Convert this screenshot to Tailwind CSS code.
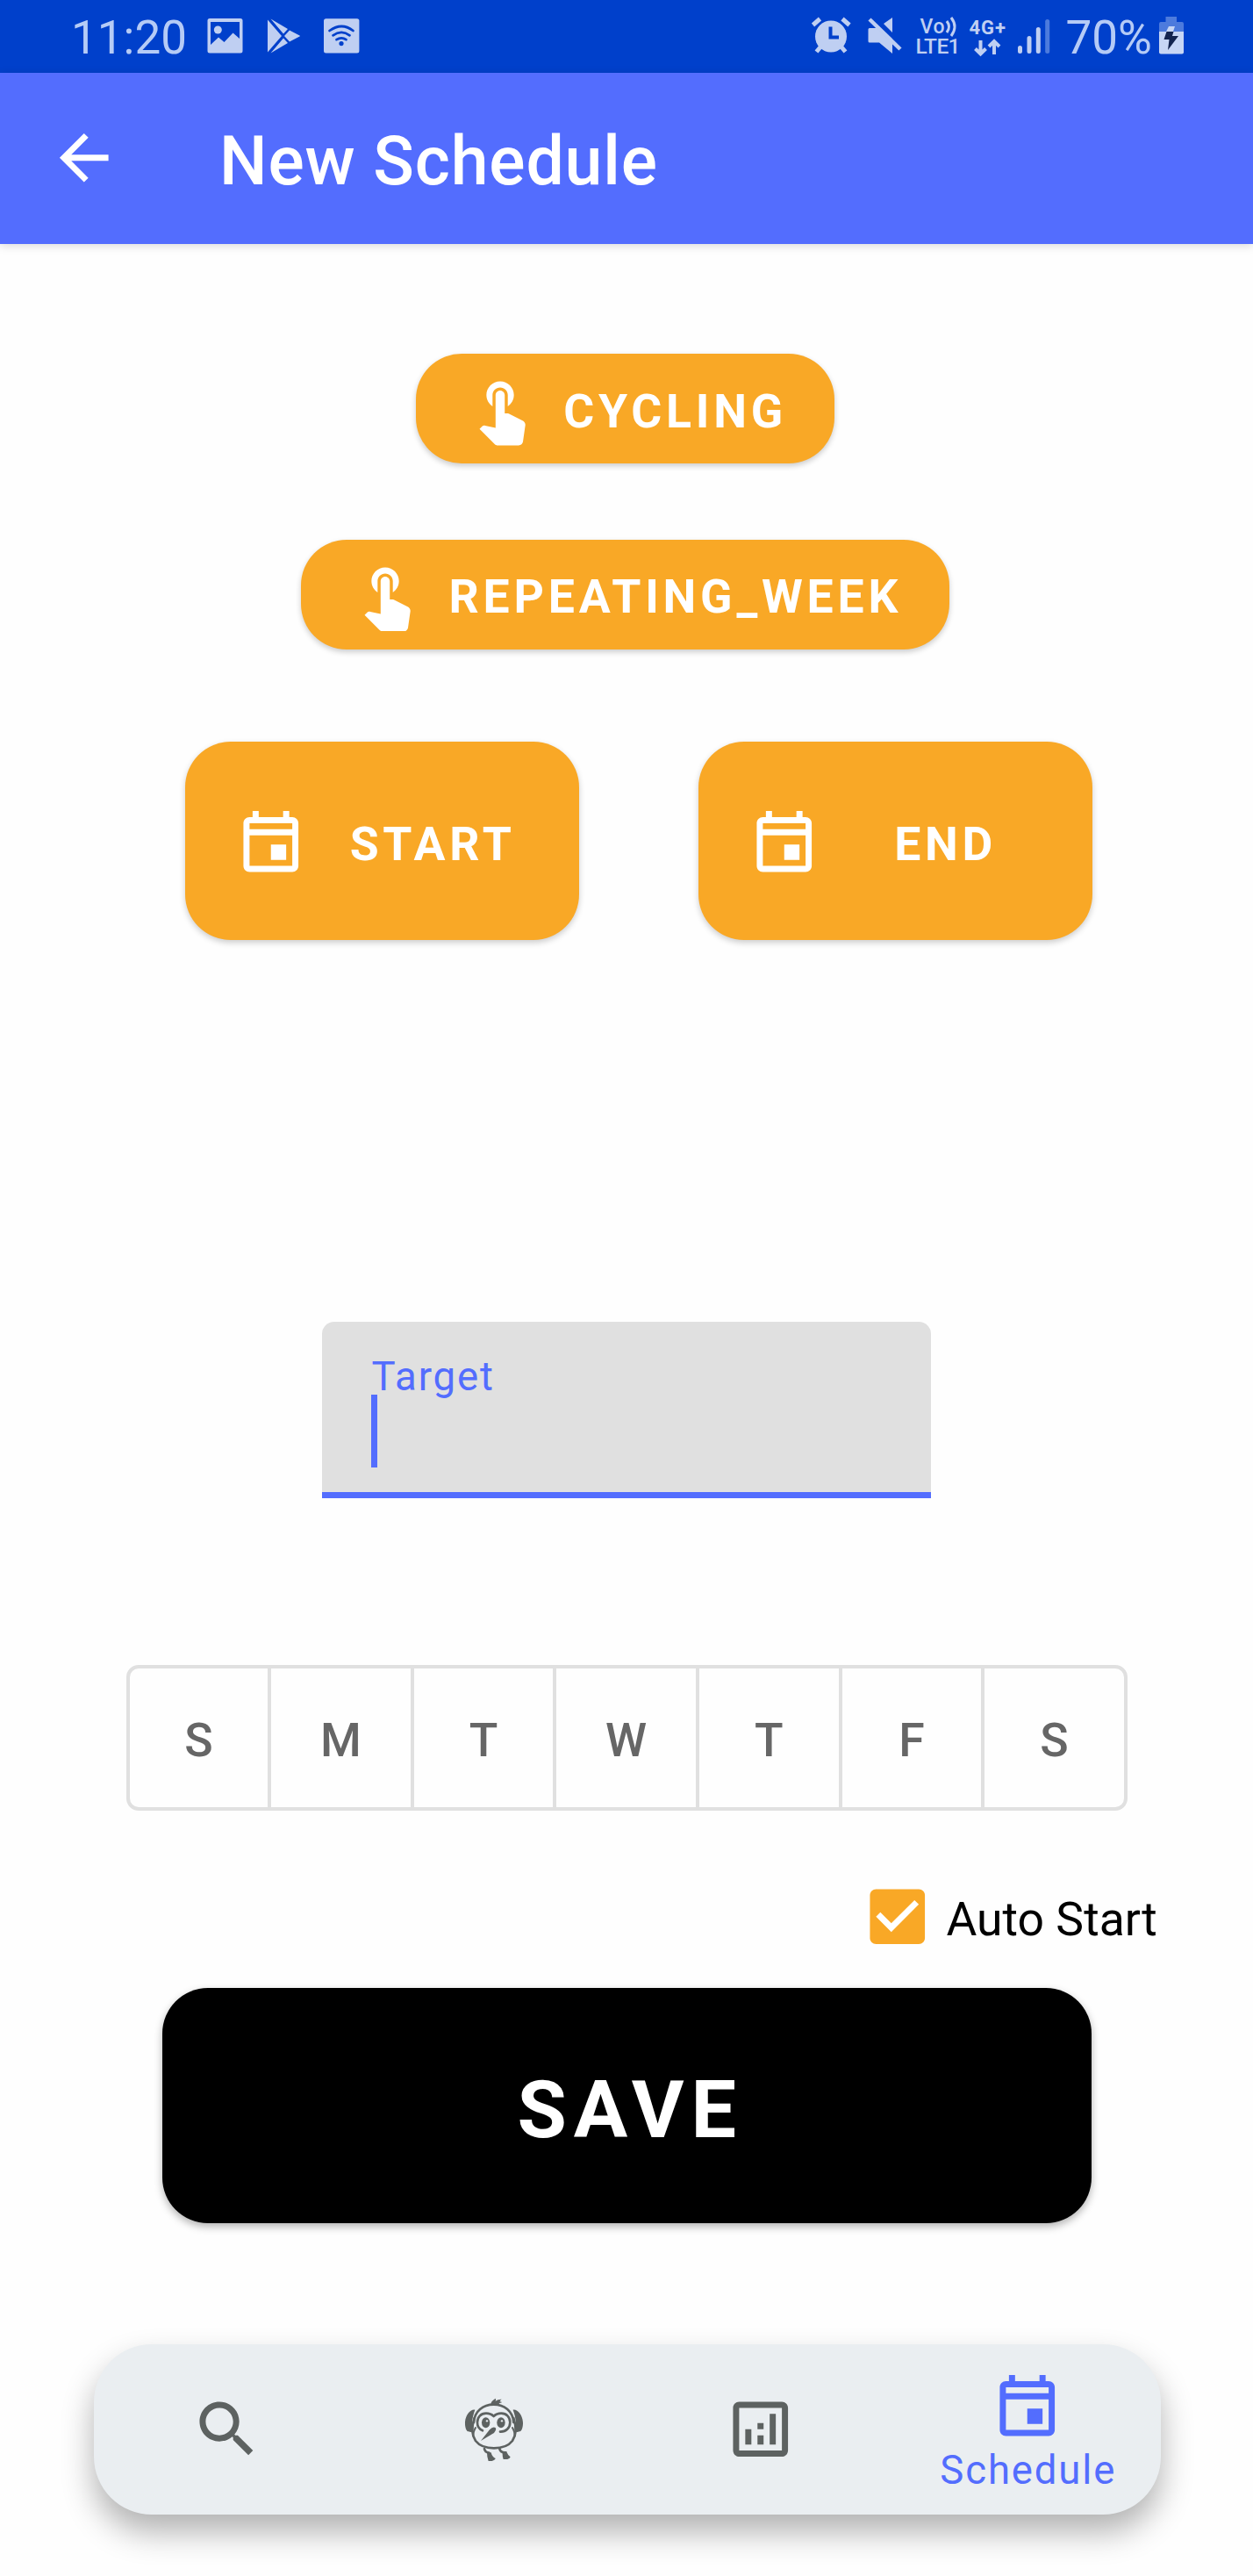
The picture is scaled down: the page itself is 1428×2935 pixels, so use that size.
<!DOCTYPE html>
<html lang="en">
<head>
<meta charset="utf-8">
<title>New Schedule</title>
<script src="https://cdn.jsdelivr.net/npm/@tailwindcss/browser@4"></script>
</head>
<body class="bg-white">
<div class="flex h-[2935px] w-[1428px] flex-col overflow-hidden bg-[#fefefe] font-[Roboto,sans-serif] leading-none">

  <!-- status bar -->
  <div class="flex h-[83px] shrink-0 items-start bg-[#0040cb] pl-[81px] text-[#b5cbf6]">
    <span class="w-[154px] pt-[17px] text-[53px]">11:20</span>
    <svg class="h-[83px] w-[176px]" viewBox="235 0 176 83" fill="#bfcff2">
      <path fill-rule="evenodd" d="M239 21h35q2.500 0 2.500 2.500v34.500q0 2.500-2.500 2.500h-35q-2.500 0-2.500-2.500v-34.500q0-2.500 2.500-2.500zM240 25v26l9-8.500 6.500 5.500 10-10.500 7.500 6.500v-19z"/>
      <circle cx="248.300" cy="34" r="4.500"/>
      <path d="M305 22.500v37l16-18.500zM308.500 21.500l14.500 17 5-5.500zM308.500 60.500l14.500-17 5 5.500zM330 34.500l-6 6.500 6 6.500 11.500-6q1-.5 0-1z"/>
      <rect x="369" y="21.300" width="40.400" height="39.300" rx="2.500"/>
      <g fill="none" stroke="#0040cb" stroke-width="2.700" stroke-linecap="round"><path d="M375.500 35q14-10 27 0M379.500 40.300q9.700-6.800 19 0M383.500 45.200q5.700-3.700 11 0"/></g>
      <circle cx="389" cy="49.600" r="2.600" fill="#0040cb"/>
    </svg>
    <svg class="ml-[512px] h-[83px] w-[284px]" viewBox="923 0 284 83" fill="#bfcff2">
      <circle cx="947" cy="41.500" r="18"/>
      <path stroke="#bfcff2" stroke-width="5" d="M926.500 28.500l8-7M968 28.500l-8-7"/>
      <path stroke="#bfcff2" stroke-width="5" d="M930.500 59l5-6M963.500 59l-5-6"/>
      <path fill="none" stroke="#0040cb" stroke-width="4" d="M946.500 30.500v12h9.500"/>
      <path d="M1017 20v17l-10-10zM991 32h8l18 17v12l-15-12.500h-11q-1.500 0-1.500-1.500v-13.500q0-1.500 1.500-1.500z"/>
      <path fill="none" stroke="#bfcff2" stroke-width="4.500" d="M991 22l35 34"/>
      <text x="1048.500" y="37.500" font-size="23" font-weight="500" textLength="28">Vo</text>
      <path fill="none" stroke="#bfcff2" stroke-width="3" d="M1079 24q5 6.500 0 13M1084 20q8 10.500 0 21"/>
      <text x="1043.500" y="61.300" font-size="24.500" font-weight="500" textLength="51">LTE1</text>
      <text x="1104.500" y="38.700" font-size="22" font-weight="700" textLength="41.500">4G+</text>
      <path fill="none" stroke="#bfcff2" stroke-width="4" d="M1117.500 46v15M1111.500 55.500l6 6 6-6M1133 62v-15M1127 53l6-6 6 6"/>
      <path stroke="#bfcff2" stroke-width="5" stroke-linecap="round" d="M1162.500 54.500v4M1173 43.500v15M1183.300 33.500v25"/>
      <path stroke="#4d7bdd" stroke-width="5" stroke-linecap="round" d="M1193.700 24.500v34"/>
    </svg>
    <span class="ml-[7.500px] w-[105.500px] pt-[17px] text-[53px]">70%</span>
    <svg class="h-[83px] w-[30px]" viewBox="1319 0 30 83">
      <path fill="#4d7bdd" d="M1327.500 19h12.500v6h6q2 0 2 2v9h-28v-9q0-2 2-2h5.500z"/>
      <path fill="#c7d6f5" d="M1320 36h28v23.500q0 2-2 2h-24q-2 0-2-2z"/>
      <path fill="#c7d6f5" d="M1331 30h7l-2 6h-8z"/>
      <path fill="#13244f" d="M1328.500 36h8l-1.500 5h7l-12 16 1.500-12h-6z"/>
    </svg>
  </div>

  <!-- app bar -->
  <header class="z-10 flex h-[194.500px] shrink-0 items-center bg-[#536dfe] pl-[53.500px] text-white shadow-[0_2px_10px_rgba(0,0,0,0.15)]">
    <svg class="h-[83.500px] w-[83.500px] mb-[2px]" viewBox="0 0 24 24" fill="currentColor"><path d="M20 11H7.830l5.590-5.590L12 4l-8 8 8 8 1.410-1.410L7.830 13H20v-2z"/></svg>
    <h1 class="ml-[113px] pt-[9px] text-[77px] font-medium tracking-[0.800px]">New Schedule</h1>
  </header>

  <main class="flex grow flex-col items-center text-[53.500px] font-bold text-white">
    <button class="mt-[125.800px] mr-[3px] flex h-[125px] w-[477.500px] items-center rounded-[52px] bg-[#f9a826] pl-[56px] shadow-[0_3px_6px_rgba(0,0,0,0.2)]">
      <svg class="h-[83.500px] w-[83.500px]" viewBox="0 0 24 24" fill="currentColor"><path d="M9 11.240V7.500C9 6.120 10.120 5 11.500 5S14 6.120 14 7.500v3.740c1.210-.81 2-2.180 2-3.740C16 5.010 13.990 3 11.500 3S7 5.010 7 7.500c0 1.560.79 2.930 2 3.740zm9.840 4.630l-4.540-2.260c-.17-.07-.35-.11-.54-.11H13v-6c0-.83-.67-1.500-1.500-1.500S10 6.670 10 7.500v10.740l-3.430-.72c-.08-.01-.15-.03-.24-.03-.31 0-.59.13-.79.33l-.79.8 4.940 4.940c.27.27.65.44 1.060.44h6.790c.75 0 1.330-.55 1.440-1.280l.75-5.270c.01-.07.02-.14.02-.2 0-.62-.38-1.160-.91-1.380z"/></svg>
      <span class="ml-[29px] pt-[6px] tracking-[4.800px]">CYCLING</span>
    </button>
    <button class="mt-[86.700px] mr-[3px] flex h-[125px] w-[739px] items-center rounded-[52px] bg-[#f9a826] pl-[56px] shadow-[0_3px_6px_rgba(0,0,0,0.2)]">
      <svg class="h-[83.500px] w-[83.500px]" viewBox="0 0 24 24" fill="currentColor"><path d="M9 11.240V7.500C9 6.120 10.120 5 11.500 5S14 6.120 14 7.500v3.740c1.210-.81 2-2.180 2-3.740C16 5.010 13.990 3 11.500 3S7 5.010 7 7.500c0 1.560.79 2.930 2 3.740zm9.840 4.630l-4.540-2.260c-.17-.07-.35-.11-.54-.11H13v-6c0-.83-.67-1.500-1.500-1.500S10 6.670 10 7.500v10.740l-3.430-.72c-.08-.01-.15-.03-.24-.03-.31 0-.59.13-.79.33l-.79.8 4.940 4.940c.27.27.65.44 1.060.44h6.790c.75 0 1.330-.55 1.440-1.280l.75-5.270c.01-.07.02-.14.02-.2 0-.62-.38-1.160-.91-1.380z"/></svg>
      <span class="ml-[29px] pt-[5px] tracking-[4.800px]">REPEATING_WEEK</span>
    </button>

    <div class="mt-[105.500px] flex w-full gap-[136px] pl-[210.700px]">
      <button class="flex h-[226px] w-[449px] items-center rounded-[52px] bg-[#f9a826] px-[56px] shadow-[0_3px_7px_rgba(0,0,0,0.2)]">
        <svg class="h-[83.500px] w-[83.500px]" viewBox="0 0 24 24" fill="currentColor"><path d="M19 4h-1V2h-2v2H8V2H6v2H5c-1.110 0-2 .9-2 2v14c0 1.100.89 2 2 2h14c1.100 0 2-.9 2-2V6c0-1.100-.9-2-2-2zm0 16H5V10h14v10zm0-12H5V6h14v2zM12 13h5v5h-5z"/></svg>
        <span class="ml-[28px] grow pt-[6px] pl-[4.500px] text-center tracking-[4.800px]">START</span>
      </button>
      <button class="flex h-[226px] w-[449px] items-center rounded-[52px] bg-[#f9a826] px-[56px] shadow-[0_3px_7px_rgba(0,0,0,0.2)]">
        <svg class="h-[83.500px] w-[83.500px]" viewBox="0 0 24 24" fill="currentColor"><path d="M19 4h-1V2h-2v2H8V2H6v2H5c-1.110 0-2 .9-2 2v14c0 1.100.89 2 2 2h14c1.100 0 2-.9 2-2V6c0-1.100-.9-2-2-2zm0 16H5V10h14v10zm0-12H5V6h14v2zM12 13h5v5h-5z"/></svg>
        <span class="ml-[28px] grow pt-[6px] pl-[3.500px] text-center tracking-[4.800px]">END</span>
      </button>
    </div>

    <!-- target field -->
    <div class="mt-[434.500px] flex h-[200.700px] w-[694px] flex-col items-start rounded-t-[14px] border-b-[7px] border-[#536dfe] bg-[#e0e0e0] pl-[55.500px] font-normal text-[#536dfe]">
      <label class="h-[83px] pt-[40px] pl-[1px] text-[45.500px] tracking-[1.900px]">Target</label>
      <span class="h-[83px] w-[7px] bg-[#536dfe]"></span>
    </div>

    <!-- weekday toggles -->
    <div class="mt-[190.300px] grid h-[166.500px] w-[1141px] grid-cols-[161.7px_repeat(5,162.6px)_1fr] divide-x-4 divide-[#e0e0e0] rounded-[14px] border-4 border-[#e0e0e0] font-medium text-[#666]">
      <div class="flex items-center justify-center pt-[5px]">S</div>
      <div class="flex items-center justify-center pt-[5px]">M</div>
      <div class="flex items-center justify-center pt-[5px]">T</div>
      <div class="flex items-center justify-center pt-[5px]">W</div>
      <div class="flex items-center justify-center pt-[5px]">T</div>
      <div class="flex items-center justify-center pt-[5px]">F</div>
      <div class="flex items-center justify-center pt-[5px]">S</div>
    </div>

    <label class="mt-[79px] ml-[980.500px] flex h-[83.500px] w-[447px] items-center self-start font-normal text-black">
      <svg class="h-[83.500px] w-[83.500px]" viewBox="0 0 24 24" fill="#f9a826"><path d="M19 3H5c-1.110 0-2 .9-2 2v14c0 1.100.89 2 2 2h14c1.110 0 2-.9 2-2V5c0-1.100-.89-2-2-2z"/><path fill="#fff" d="M10 17l-5-5 1.410-1.410L10 14.170l7.590-7.590L19 8l-9 9z"/></svg>
      <span class="ml-[14.500px] pt-[5px]">Auto Start</span>
    </label>

    <button class="mt-[39.500px] flex h-[268px] w-[1059px] items-center justify-center rounded-[52px] bg-black text-[91.500px] shadow-[0_4px_10px_rgba(0,0,0,0.3)]">
      <span class="pt-[9px] pl-[8.500px] tracking-[8px]">SAVE</span>
    </button>

    <!-- bottom navigation -->
    <nav class="mt-[137.500px] ml-[1.500px] grid h-[194.500px] w-[1216px] grid-cols-4 rounded-[66px] bg-[#eaeef1] font-normal text-[#5d6261] shadow-[0_20px_36px_rgba(0,0,0,0.3)]">
      <a class="flex items-center justify-center"><svg class="h-[83.500px] w-[83.500px]" viewBox="0 0 24 24" fill="currentColor"><path d="M15.500 14h-.79l-.28-.27C15.410 12.590 16 11.110 16 9.500 16 5.910 13.090 3 9.500 3S3 5.910 3 9.500 5.910 16 9.500 16c1.610 0 3.090-.59 4.230-1.570l.27.28v.79l5 4.990L20.490 19l-4.990-5zm-6 0C7.010 14 5 11.990 5 9.500S7.010 5 9.500 5 14 7.010 14 9.500 11.990 14 9.500 14z"/></svg></a>
      <a class="flex items-center justify-center">
        <svg class="h-[80px] w-[73.300px]" viewBox="50 54 220 240" fill="currentColor">
          <g fill="none" stroke="currentColor" stroke-width="8" stroke-linecap="round" stroke-linejoin="round">
            <path d="M92 150C94 112 124 89 160 89s66 23 68 61"/>
            <path d="M94 135C84 165 84 192 98 213 112 231 138 238 161 238s49-7 63-25c14-21 14-48 4-78"/>
            <path d="M98 168q-9 16-8 28M224 168q9 16 8 28" stroke-width="6"/>
            <path d="M122 178C110 173 104 164 104 150c0-18 12-31 30-31 12 0 20 4 26 10 6-6 14-10 26-10 18 0 30 13 30 31 0 19-14 33-34 32" stroke-width="8"/>
            <path d="M128 240q2 12 16 14M180 240q2 12 18 13"/>
          </g>
          <path d="M96 107c-16-3-32 18-34 42-1 17 5 33 12 32 6 3 12 2 14 0-4-28-2-46 8-74zM226 107c16-3 32 18 34 42 1 17-5 33-12 32-6 3-12 2-14 0 4-28 2-46-8-74z"/>
          <ellipse cx="133" cy="151" rx="14" ry="18"/><ellipse cx="185" cy="151" rx="14" ry="18"/>
          <circle cx="137" cy="145" r="3.500" fill="#eaeef1"/><circle cx="188" cy="145" r="3.500" fill="#eaeef1"/>
          <path d="M116 213l30-38q11-12 20-7 5 6-5 18z"/>
          <path d="M150 88q0-10 16-20 3 3 0 9 9-7 21-6-6 4-6 8 6 0 7 3-8 0-14 8z"/>
          <path d="M137 253h14q4 16 15 20 0 5-12 9h-12q-5-12-5-29zM190 249h14q4 14 13 19 0 5-10 8h-14q-4-12-3-27z"/>
        </svg>
      </a>
      <a class="flex items-center justify-center"><svg class="h-[83.500px] w-[83.500px]" viewBox="0 0 24 24" fill="currentColor"><path d="M19 3H5c-1.100 0-2 .9-2 2v14c0 1.100.9 2 2 2h14c1.100 0 2-.9 2-2V5c0-1.100-.9-2-2-2zm0 16H5V5h14v14zM7 12h2v5H7zM15 7h2v10h-2zM11 14h2v3h-2zM11 10h2v2h-2z"/></svg></a>
      <a class="flex flex-col items-center pt-[28px] text-[#536dfe]">
        <svg class="h-[83.500px] w-[83.500px] shrink-0" viewBox="0 0 24 24" fill="currentColor"><path d="M19 4h-1V2h-2v2H8V2H6v2H5c-1.110 0-2 .9-2 2v14c0 1.100.89 2 2 2h14c1.100 0 2-.9 2-2V6c0-1.100-.9-2-2-2zm0 16H5V10h14v10zm0-12H5V6h14v2zM12 13h5v5h-5z"/></svg>
        <span class="mt-[10px] pl-[2px] text-[45.500px] tracking-[1.850px]">Schedule</span>
      </a>
    </nav>
  </main>
</div>
</body>
</html>
